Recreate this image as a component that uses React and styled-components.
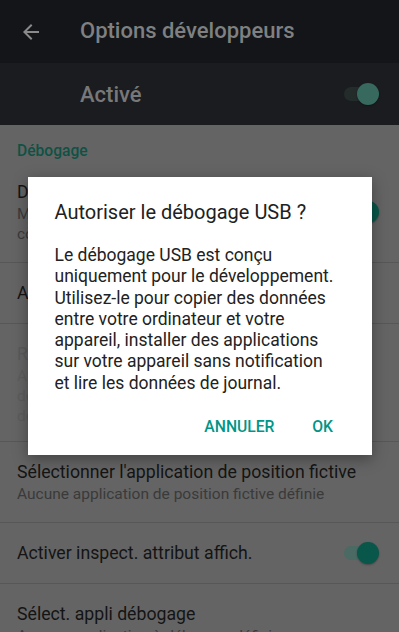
import styled, { createGlobalStyle } from 'styled-components';

const GlobalStyle = createGlobalStyle`
  html, body { margin: 0; padding: 0; }
  body {
    width: 399px;
    height: 632px;
    overflow: hidden;
    font-family: Roboto, "Noto Sans", "Liberation Sans", sans-serif;
    background: #646464;
  }
`;

const Screen = styled.div`
  position: relative;
  width: 399px;
  height: 632px;
  overflow: hidden;
  background: #646464;
`;

const Toolbar = styled.div`
  height: 63px;
  display: flex;
  align-items: center;
  padding-left: 19px;
  gap: 37px;
  background: #131518;
  box-sizing: border-box;
`;

const ToolbarTitle = styled.div`
  font-size: 22px;
  font-weight: 500;
  color: #7f8081;
  padding-bottom: 2px;
`;

const MasterBar = styled.div`
  height: 62px;
  display: flex;
  align-items: center;
  justify-content: space-between;
  padding: 0 21px 0 80px;
  background: #1a1c1f;
  box-sizing: border-box;
`;

const MasterLabel = styled.div`
  font-size: 22px;
  font-weight: 500;
  color: #787878;
`;

const SectionHeader = styled.div`
  padding: 16px 17px 0;
  line-height: 20px;
  height: 37px;
  box-sizing: border-box;
  font-size: 15.6px;
  font-weight: 500;
  color: #0f5244;
`;

const Row = styled.div`
  display: flex;
  align-items: center;
  gap: 12px;
  padding: 18px 21px ${(p) => (p.$compact ? '15px' : '18px')} 17px;
  border-bottom: 1px solid #575757;
`;

const RowText = styled.div`
  flex: 1;
  min-width: 0;
`;

const RowTitle = styled.div`
  font-size: 17.7px;
  line-height: 24px;
  color: ${(p) => (p.$disabled ? '#5a5a5a' : '#141414')};
  white-space: nowrap;
  overflow: hidden;
  text-overflow: ellipsis;
`;

const RowSub = styled.div`
  font-size: 15.5px;
  line-height: 20px;
  white-space: nowrap;
  color: ${(p) => (p.$disabled ? '#5c5c5c' : '#3a3a3a')};
`;

const Track = styled.div`
  position: relative;
  width: 34px;
  height: 14px;
  border-radius: 7px;
  background: ${(p) => p.$track};
  flex-shrink: 0;
`;

const Thumb = styled.div`
  position: absolute;
  right: -1px;
  top: -4px;
  width: 22px;
  height: 22px;
  border-radius: 50%;
  background: ${(p) => p.$thumb};
  box-shadow: 0 1px 2px rgba(0, 0, 0, 0.3);
`;

const Overlay = styled.div`
  position: absolute;
  inset: 0;
  display: flex;
  justify-content: center;
  padding-top: 177px;
  box-sizing: border-box;
`;

const Dialog = styled.div`
  width: 344px;
  height: 278px;
  background: #ffffff;
  box-shadow: 0 4px 14px rgba(0, 0, 0, 0.35);
  box-sizing: border-box;
  padding: 21px 0 11px;
  display: flex;
  flex-direction: column;
`;

const DialogTitle = styled.div`
  padding: 0 27px;
  font-size: 20px;
  line-height: 28px;
  color: #212121;
`;

const DialogBody = styled.div`
  padding: 19px 32px 0 27px;
  font-size: 17.5px;
  line-height: 21.3px;
  color: #222222;
`;

const Actions = styled.div`
  margin-top: auto;
  display: flex;
  justify-content: flex-end;
  gap: 8px;
  padding-right: 17px;
`;

const ActionButton = styled.button`
  min-width: 64px;
  height: 36px;
  padding: 0 8px;
  border: none;
  background: transparent;
  font-family: inherit;
  font-size: 15.7px;
  font-weight: 500;
  color: #009587;
  text-transform: uppercase;
`;

function Switch({ track, thumb }) {
  return (
    <Track $track={track}>
      <Thumb $thumb={thumb} />
    </Track>
  );
}

function BackArrow() {
  return (
    <svg width="24" height="24" viewBox="0 0 24 24" fill="#8a8a8a">
      <path d="M20 11H7.83l5.59-5.59L12 4l-8 8 8 8 1.41-1.41L7.83 13H20v-2z" />
    </svg>
  );
}

const items = [
  { title: 'Débogage USB', sub: ["Mode débogage lorsque l'USB est", 'connecté'], toggle: true },
  { title: 'Annuler autorisations pour le débogage USB' },
  {
    title: 'Raccourci rapport de bug',
    sub: ['Afficher un bouton dans le menu Marche/Arrêt', "de l'appareil pour créer un rapport de", 'de bug'],
    disabled: true,
    compact: true,
  },
  { title: "Sélectionner l'application de position fictive", sub: ['Aucune application de position fictive définie'] },
  { title: 'Activer inspect. attribut affich.', toggle: true },
  { title: 'Sélect. appli débogage', sub: ['Aucune application à déboguer définie'] },
];

export default function App() {
  return (
    <Screen>
      <GlobalStyle />
      <Toolbar>
        <BackArrow />
        <ToolbarTitle>Options développeurs</ToolbarTitle>
      </Toolbar>
      <MasterBar>
        <MasterLabel>Activé</MasterLabel>
        <Switch track="#232c2a" thumb="#37695f" />
      </MasterBar>
      <SectionHeader>Débogage</SectionHeader>
      {items.map((it) => (
        <Row key={it.title} $compact={it.compact}>
          <RowText>
            <RowTitle $disabled={it.disabled}>{it.title}</RowTitle>
            {it.sub &&
              it.sub.map((line) => (
                <RowSub key={line} $disabled={it.disabled}>
                  {line}
                </RowSub>
              ))}
          </RowText>
          {it.toggle && <Switch track="#4b6a63" thumb="#08574a" />}
        </Row>
      ))}
      <Overlay>
        <Dialog>
          <DialogTitle>Autoriser le débogage USB ?</DialogTitle>
          <DialogBody>
            Le débogage USB est conçu uniquement pour le développement. Utilisez-le pour copier des données
            entre votre ordinateur et votre appareil, installer des applications sur votre appareil sans
            notification et lire les données de journal.
          </DialogBody>
          <Actions>
            <ActionButton>Annuler</ActionButton>
            <ActionButton>OK</ActionButton>
          </Actions>
        </Dialog>
      </Overlay>
    </Screen>
  );
}
